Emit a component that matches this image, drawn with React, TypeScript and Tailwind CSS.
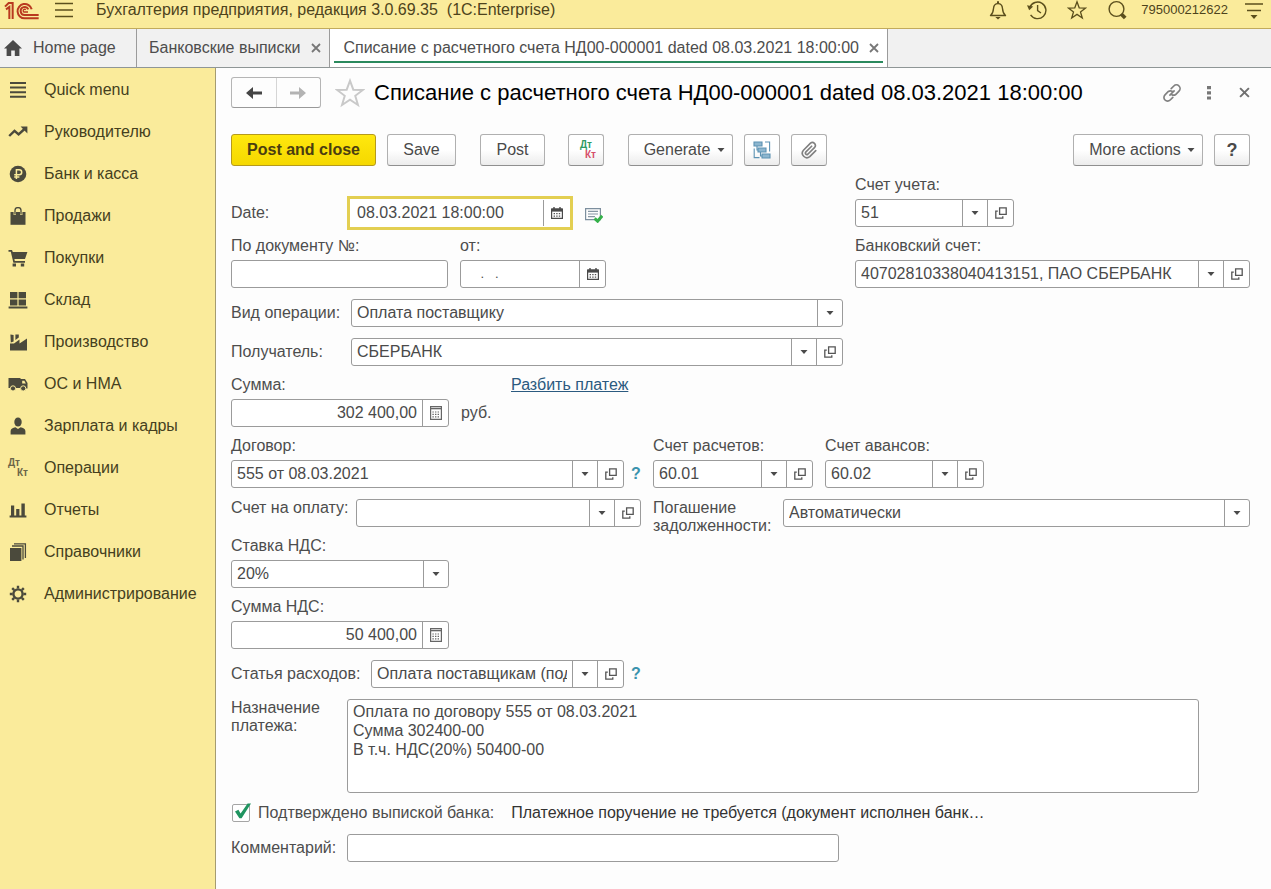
import React from "react";

type IconProps = { className?: string };

/* ---------- Icons ---------- */

const Logo = () => (
  <svg viewBox="0 0 108 57" className="h-[19px] w-9 shrink-0" fill="none" stroke="#b9391f" strokeWidth="6" aria-label="1C">
    <path d="M3 17 L14 6 H26 V54" />
    <path d="M6 25 L16 18 V54" />
    <path d="M83 25 A21.5 21.5 0 1 0 62 52 H104" />
    <path d="M73 25 A12 12 0 1 0 62 42 H104" />
    <path d="M65 27 A4 4 0 1 0 62 33 H72" strokeWidth="4" />
  </svg>
);

const Burger = () => (
  <svg viewBox="0 0 18 16" className="h-4 w-[18px]" stroke="#5b4f1d" strokeWidth="1.5">
    <path d="M0 1.5H18M0 8H18M0 14.5H18" />
  </svg>
);

const Bell = () => (
  <svg viewBox="0 0 18 20" className="h-5 w-[18px]" fill="none" stroke="#5b4f1d" strokeWidth="1.4">
    <path d="M1.5 15.5 C4 13.5 4.3 11.5 4.5 8.5 C4.7 5.5 6.3 3.6 9 3.6 C11.7 3.6 13.3 5.5 13.5 8.5 C13.7 11.5 14 13.5 16.5 15.5 Z" strokeLinejoin="round" />
    <path d="M9 1.2V3.6" strokeWidth="2" />
    <path d="M6.3 17H11.7L9 19.6Z" fill="#5b4f1d" stroke="none" />
  </svg>
);

const History = () => (
  <svg viewBox="0 0 20 20" className="h-5 w-5" fill="none" stroke="#5b4f1d" strokeWidth="1.4">
    <path d="M2.8 7.5A8.3 8.3 0 1 1 3.6 14.8" />
    <path d="M10.6 5V10.6L14 13" />
    <path d="M0 5.2L6.2 6.6L2.2 10.2Z" fill="#5b4f1d" stroke="none" />
  </svg>
);

const Star = ({ className }: IconProps) => (
  <svg viewBox="0 0 20 20" className={className} fill="none" stroke="currentColor" strokeWidth="1.3" strokeLinejoin="miter">
    <path d="M10 1.8L12.2 7.8L18.6 8L13.5 11.9L15.3 18L10 14.4L4.7 18L6.5 11.9L1.4 8L7.8 7.8Z" />
  </svg>
);

const Search = () => (
  <svg viewBox="0 0 20 20" className="h-5 w-5" fill="none" stroke="#5b4f1d">
    <circle cx="9.5" cy="9" r="7.4" strokeWidth="1.4" />
    <path d="M14.2 14L18.2 18" strokeWidth="3.8" />
  </svg>
);

const Options = () => (
  <svg viewBox="0 0 18 18" className="h-[18px] w-[18px]" stroke="#5b4f1d" strokeWidth="1.5">
    <path d="M0 3H18M2 9.5H16" />
    <path d="M5.5 14H12.5L9 18Z" fill="#5b4f1d" stroke="none" />
  </svg>
);

const Home = () => (
  <svg viewBox="0 0 18 16" className="h-4 w-[18px]" fill="#4a4a4a">
    <path d="M9 0L18 8.6H15.4V16H10.8V10.5H7.2V16H2.6V8.6H0Z" />
  </svg>
);

const Cross = ({ className }: IconProps) => (
  <svg viewBox="0 0 10 10" className={className} stroke="currentColor" strokeWidth="1.8">
    <path d="M1 1L9 9M9 1L1 9" />
  </svg>
);

const ArrowLeft = ({ className }: IconProps) => (
  <svg viewBox="0 0 18 14" className={className} fill="currentColor">
    <path d="M1 7L8 1V5.5H17V8.5H8V13Z" />
  </svg>
);

const Link = () => (
  <svg viewBox="0 0 24 24" className="h-5 w-5" fill="none" stroke="#808080" strokeWidth="2" strokeLinecap="round">
    <path d="M9.5 14.5L14.5 9.5" />
    <path d="M11 6.8L14.2 3.6A4.3 4.3 0 0 1 20.4 9.8L16.4 13.8A4.3 4.3 0 0 1 11.8 14" />
    <path d="M13 17.2L9.8 20.4A4.3 4.3 0 0 1 3.6 14.2L7.6 10.2A4.3 4.3 0 0 1 12.2 10" />
  </svg>
);

const Dots = () => (
  <svg viewBox="0 0 4 14" className="h-[14px] w-1" fill="#777">
    <path d="M0 0H4V3.2H0ZM0 5.2H4V8.4H0ZM0 10.4H4V13.6H0Z" />
  </svg>
);

const Caret = () => (
  <svg viewBox="0 0 8 4" className="h-1 w-2" fill="#4a4a4a">
    <path d="M0.5 0H7.5L4 4Z" />
  </svg>
);

const OpenIcon = () => (
  <svg viewBox="0 0 12 12" className="h-3 w-3" fill="none" stroke="#555" strokeWidth="1.3">
    <path d="M4.6 0.8H11.2V7.4H4.6Z" />
    <path d="M2.8 4.2H0.8V11.2H7.8V9.2" />
  </svg>
);

const CalendarIcon = () => (
  <svg viewBox="0 0 12 12" className="h-3 w-3" fill="none">
    <path d="M0.6 2H11.4V11.4H0.6Z" stroke="#4a4a4a" strokeWidth="1.2" />
    <path d="M0.6 1.5H11.4V4.6H0.6Z" fill="#4a4a4a" />
    <path d="M3 0V3M9 0V3" stroke="#4a4a4a" strokeWidth="1.4" />
    <path d="M2.6 6.7H9.6M2.6 9.1H9.6" stroke="#555" strokeWidth="1.2" strokeDasharray="1.4 1.2" />
  </svg>
);

const CalculatorIcon = () => (
  <svg viewBox="0 0 12 14" className="h-[14px] w-3" fill="none" stroke="#666">
    <path d="M0.6 0.6H11.4V13.4H0.6Z" strokeWidth="1.2" />
    <path d="M1 2.6H11" strokeWidth="1.4" />
    <path d="M2.4 6H9.8M2.4 8.4H9.8M2.4 10.8H9.8" strokeWidth="1.2" strokeDasharray="1.4 1.2" />
  </svg>
);

const PostedIcon = () => (
  <svg viewBox="0 0 18 16" className="h-4 w-[18px]" fill="none">
    <path d="M0.6 1.6H15.4V12.6H0.6Z" stroke="#7d8f9e" strokeWidth="1.2" />
    <path d="M3 4.4H13M3 7H13M3 9.6H10" stroke="#8696a3" strokeWidth="1.2" />
    <path d="M9.6 11.4L12.6 14.2L17.2 8.8" stroke="#35b14a" strokeWidth="3" />
  </svg>
);

const StructureIcon = () => (
  <svg viewBox="0 0 18 18" className="h-[18px] w-[18px]" fill="#8db6cf" stroke="#5c92b3" strokeWidth="1.1">
    <path d="M1 1H9V5H1ZM5 7H13V11H5ZM9 13H17V17H9Z" />
    <path d="M12 1H16.6V10.5M1.2 7.5V16.6H6.5M4 5V9H5M7.5 11V15H9" fill="none" />
  </svg>
);

const Clip = () => (
  <svg viewBox="0 0 24 24" className="h-[18px] w-[18px]" fill="none" stroke="#808080" strokeWidth="2.2" strokeLinecap="round" strokeLinejoin="round">
    <path d="M15.5 7L7.6 14.9A2 2 0 0 0 10.4 17.7L19.6 8.5A4 4 0 0 0 14 2.9L4.6 12.3A6 6 0 0 0 13 20.8L21 12.8" />
  </svg>
);

const DtKt = ({ dt, kt }: { dt: string; kt: string }) => (
  <span className="flex w-5 flex-col text-[10px] leading-[10px] font-bold" aria-hidden="true">
    <span className={dt}>Дт</span>
    <span className={kt}>Кт</span>
  </span>
);

const menuIcon = "h-[18px] w-5";

const menu: { label: string; icon: React.ReactNode }[] = [
  {
    label: "Quick menu",
    icon: (
      <svg viewBox="0 0 20 18" className={menuIcon} stroke="#4b4a3c" strokeWidth="2">
        <path d="M2 2H18M2 6.6H18M2 11.2H18M2 15.8H18" />
      </svg>
    ),
  },
  {
    label: "Руководителю",
    icon: (
      <svg viewBox="0 0 20 18" className={menuIcon} fill="none" stroke="#4b4a3c" strokeWidth="2.4">
        <path d="M1.2 13L6.5 7.8L10.6 11.4L16.5 6" />
        <path d="M12.6 3.6H19.4V10.4Z" fill="#4b4a3c" stroke="none" />
      </svg>
    ),
  },
  {
    label: "Банк и касса",
    icon: (
      <svg viewBox="0 0 20 18" className={menuIcon} fill="none">
        <circle cx="10" cy="9" r="8.3" fill="#4b4a3c" />
        <path d="M8.4 14V4.8H11.2A2.5 2.5 0 0 1 11.2 9.8H6.2M6.2 12H11.4" stroke="#faeb9b" strokeWidth="1.5" />
      </svg>
    ),
  },
  {
    label: "Продажи",
    icon: (
      <svg viewBox="0 0 20 18" className={menuIcon} fill="none">
        <path d="M2.5 5H17.5V17.8H2.5Z" fill="#4b4a3c" />
        <path d="M6.8 8V4M13.2 8V4" stroke="#faeb9b" strokeWidth="2.4" />
        <path d="M7 7.5V3.4A3 2.8 0 0 1 13 3.4V7.5" stroke="#4b4a3c" strokeWidth="1.3" />
      </svg>
    ),
  },
  {
    label: "Покупки",
    icon: (
      <svg viewBox="0 0 20 18" className={menuIcon} fill="#4b4a3c">
        <path d="M0.5 1H4L4.8 3H19.4L17 10H6.4L6.8 12H17V13.8H5.4L2.8 2.8H0.5Z" />
        <path d="M4.6 14.4H8V17.6H4.6ZM12.8 14.4H16.2V17.6H12.8Z" />
      </svg>
    ),
  },
  {
    label: "Склад",
    icon: (
      <svg viewBox="0 0 20 18" className={menuIcon} fill="#4b4a3c">
        <path d="M2 1H9.4V7.2H2ZM10.6 1H18V7.2H10.6ZM2 8.4H9.4V14.4H2ZM10.6 8.4H18V14.4H10.6ZM0.6 15.4H19.4V17.6H0.6Z" />
      </svg>
    ),
  },
  {
    label: "Производство",
    icon: (
      <svg viewBox="0 0 20 18" className={menuIcon} fill="#4b4a3c">
        <path d="M2 10.5H6L11.5 6.4V10.5L19 5.6V17.5H2Z" />
        <path d="M2.4 1.4L5.6 2V8.6L2.8 9.4ZM7.4 1.4H10.8V4.6L7.4 7Z" />
      </svg>
    ),
  },
  {
    label: "ОС и НМА",
    icon: (
      <svg viewBox="0 0 20 18" className={menuIcon} fill="#4b4a3c">
        <path d="M0.5 3H12.5V13H0.5ZM12.5 4H17L19.5 8V13.4H12.5Z" />
        <path d="M14.2 5.8H16.4L17.8 8.4H14.2Z" fill="#faeb9b" />
        <g stroke="#faeb9b" strokeWidth="1">
          <circle cx="5" cy="13.4" r="2.6" />
          <circle cx="15.2" cy="13.4" r="2.6" />
        </g>
      </svg>
    ),
  },
  {
    label: "Зарплата и кадры",
    icon: (
      <svg viewBox="0 0 20 18" className={menuIcon} fill="#4b4a3c">
        <ellipse cx="10" cy="5" rx="3.7" ry="4.6" />
        <path d="M2.6 17.4V14C2.6 11.8 5 10.8 7.4 10.2L10 12L12.6 10.2C15 10.8 17.4 11.8 17.4 14V17.4Z" />
      </svg>
    ),
  },
  { label: "Операции", icon: <DtKt dt="text-[#6a6548]" kt="self-end text-[#6a6548]" /> },
  {
    label: "Отчеты",
    icon: (
      <svg viewBox="0 0 20 18" className={menuIcon} fill="#4b4a3c">
        <path d="M3 4.4H6.2V15H3ZM8.2 8H11.4V15H8.2ZM13.4 2.4H16.8V15H13.4ZM1.6 14.6H18.4V16.6H1.6Z" />
      </svg>
    ),
  },
  {
    label: "Справочники",
    icon: (
      <svg viewBox="0 0 20 18" className={menuIcon} fill="#4b4a3c">
        <path d="M2 5H13.4V18H2Z" />
        <path d="M4 3H15V16.6M6 0.8H17.4V15" fill="none" stroke="#4b4a3c" strokeWidth="1.3" />
      </svg>
    ),
  },
  {
    label: "Администрирование",
    icon: (
      <svg viewBox="0 0 20 18" className={menuIcon} fill="none" stroke="#4b4a3c">
        <circle cx="10" cy="9" r="4.6" strokeWidth="2.4" />
        <path d="M10 0.8V3.6M10 14.4V17.2M1.8 9H4.6M15.4 9H18.2M4.2 3.2L6.2 5.2M13.8 12.8L15.8 14.8M4.2 14.8L6.2 12.8M13.8 5.2L15.8 3.2" strokeWidth="2.4" />
      </svg>
    ),
  },
];

/* ---------- Form parts ---------- */

const frame = "flex h-7 rounded-[3px] border border-[#9b9b9b] bg-white";
const control = "min-w-0 flex-1 bg-transparent px-[5px] text-[#4a4a4a] outline-none";
const addon = "flex w-[26px] shrink-0 items-center justify-center border-l border-[#9b9b9b]";
const stackedLabel = "mb-[6px] block leading-4";

const OpenButton = () => (
  <button type="button" className={addon} aria-label="Open">
    <OpenIcon />
  </button>
);

type FieldProps = { id: string; value: string; className?: string; open?: boolean };

const Choice = ({ id, value, className = "", open = false }: FieldProps) => (
  <div className={`${frame} ${className}`}>
    <div className="relative flex min-w-0 flex-1">
      <select id={id} defaultValue={value} className="w-full min-w-0 appearance-none bg-transparent pr-[30px] pb-px pl-[5px] text-[#4a4a4a] outline-none">
        <option>{value}</option>
      </select>
      <span className="pointer-events-none absolute inset-y-0 right-0 flex w-[25px] items-center justify-center border-l border-[#9b9b9b]">
        <Caret />
      </span>
    </div>
    {open && <OpenButton />}
  </div>
);

const Amount = ({ id, value }: FieldProps) => (
  <div className={`${frame} w-[218px]`}>
    <input id={id} defaultValue={value} className={`${control} text-right`} />
    <button type="button" className={addon} aria-label="Calculator">
      <CalculatorIcon />
    </button>
  </div>
);

const Stacked = ({ id, label, className = "", children }: { id: string; label: string; className?: string; children: React.ReactNode }) => (
  <div className={className}>
    <label htmlFor={id} className={stackedLabel}>{label}</label>
    {children}
  </div>
);

const toolButton =
  "flex h-8 items-center justify-center rounded-[3px] border border-[#b0b0b0] border-b-[#8f8f8f] bg-linear-to-b from-white from-50% to-[#ececec] text-[#4a4a4a]";

const Help = () => (
  <a href="#help" className="text-[16px] font-bold text-[#3a93ad]">?</a>
);

const docTitle = "Списание с расчетного счета НД00-000001 dated 08.03.2021 18:00:00";

export default function App() {
  return (
    <div className="flex min-h-screen flex-col bg-[#fdfdfd] font-['Liberation_Sans',Arial,sans-serif] text-[16px] leading-5 text-[#4d4d4d]">
      <header className="flex h-[29px] items-center border-b border-[#c2ab5c] bg-[#faeb9b] pr-2 pb-2 pl-1 text-[#4d431c]">
        <Logo />
        <button type="button" aria-label="Main menu" className="ml-[15px]"><Burger /></button>
        <span className="ml-[23px] whitespace-pre">Бухгалтерия предприятия, редакция 3.0.69.35  (1C:Enterprise)</span>
        <div className="ml-auto flex items-center gap-5">
          <button type="button" aria-label="Notifications"><Bell /></button>
          <button type="button" aria-label="History"><History /></button>
          <button type="button" aria-label="Favorites"><Star className="h-5 w-5 text-[#5b4f1d]" /></button>
          <button type="button" aria-label="Search"><Search /></button>
        </div>
        <span className="ml-[14px] text-[13px]">795000212622</span>
        <button type="button" aria-label="Options" className="ml-[17px]"><Options /></button>
      </header>

      <nav className="flex h-[39px] border-b border-[#8f9696] bg-[#f1f1f1]">
        <a href="#home" className="flex w-[137px] items-center gap-[11px] border-r border-[#9b9b9b] pl-1">
          <Home />
          Home page
        </a>
        <div className="flex items-center gap-[11px] border-r border-[#9b9b9b] pr-2 pl-3">
          <a href="#statements">Банковские выписки</a>
          <button type="button" aria-label="Close tab"><Cross className="h-[10px] w-[10px] text-[#777]" /></button>
        </div>
        <div className="flex border-r border-[#9b9b9b] bg-white px-1">
          <div className="mb-1 flex items-center gap-[10px] border-b-2 border-[#2b8a5e] pt-[6px] pr-1 pl-[9px]">
            <a href="#document">{docTitle}</a>
            <button type="button" aria-label="Close tab"><Cross className="h-[10px] w-[10px] text-[#777]" /></button>
          </div>
        </div>
      </nav>

      <div className="flex flex-1">
        <aside className="w-[216px] shrink-0 border-r border-[#a59c70] bg-[#faeb9b] pt-px">
          {menu.map((item) => (
            <a key={item.label} href="#section" className="flex h-[42px] items-center gap-4 pl-2 text-[#453f20]">
              <span className="flex w-5 justify-center">{item.icon}</span>
              {item.label}
            </a>
          ))}
        </aside>

        <main className="min-w-0 flex-1 pt-[9px] pr-[21px] pb-6 pl-[15px]">
          <div className="flex h-[31px] items-center">
            <div className="flex h-[31px] w-[90px] rounded-[3px] border border-[#b5b5b5] border-b-[#999]">
              <button type="button" aria-label="Back" className="flex flex-1 items-center justify-center border-r border-[#d5d5d5]">
                <ArrowLeft className="h-[14px] w-[18px] text-[#444]" />
              </button>
              <button type="button" aria-label="Forward" className="flex flex-1 items-center justify-center">
                <ArrowLeft className="h-[14px] w-[18px] rotate-180 text-[#b3b3b3]" />
              </button>
            </div>
            <button type="button" aria-label="Add to favorites" className="ml-[14px]"><Star className="h-[30px] w-[30px] text-[#c9c9c9]" /></button>
            <h1 className="ml-[9px] text-[22px] leading-7 whitespace-nowrap text-black">{docTitle}</h1>
            <div className="ml-auto flex items-center">
              <button type="button" aria-label="Get link"><Link /></button>
              <button type="button" aria-label="More" className="ml-[25px]"><Dots /></button>
              <button type="button" aria-label="Close" className="ml-7"><Cross className="h-[11px] w-[11px] text-[#707070]" /></button>
            </div>
          </div>

          <div className="mt-[26px] flex items-center">
            <button type="button" className="h-8 w-[145px] rounded-[3px] border border-[#b59a1c] bg-linear-to-b from-[#ffe80e] to-[#f5d800] font-bold text-[#4a3d10]">Post and close</button>
            <button type="button" className={`${toolButton} ml-[11px] w-[69px]`}>Save</button>
            <button type="button" className={`${toolButton} ml-6 w-[65px]`}>Post</button>
            <button type="button" aria-label="Postings" className={`${toolButton} ml-[23px] w-9`}>
              <DtKt dt="text-[#2e9b62]" kt="self-end text-[#d6506a]" />
            </button>
            <button type="button" className={`${toolButton} ml-6 w-[105px] gap-[7px] pl-2`}>Generate <Caret /></button>
            <button type="button" aria-label="Related documents" className={`${toolButton} ml-[11px] w-9`}><StructureIcon /></button>
            <button type="button" aria-label="Attachments" className={`${toolButton} ml-[11px] w-9`}><Clip /></button>
            <button type="button" className={`${toolButton} ml-auto w-[130px] gap-[6px] pl-2`}>More actions <Caret /></button>
            <button type="button" aria-label="Help" className={`${toolButton} ml-[11px] w-9 text-[18px] font-bold`}>?</button>
          </div>

          <form className="mt-[11px] flex flex-col gap-[11px]">
            <div className="grid grid-cols-[612fr_395fr] gap-3">
              <div className="flex flex-col gap-[11px]">
                <div className="flex flex-col gap-2 pt-[19px]">
                  <div className="flex items-center">
                    <label htmlFor="date" className="w-[116px]">Date:</label>
                    <div className="flex h-[34px] w-[226px] border-3 border-[#e3cf52] bg-white py-px pr-px">
                      <input id="date" defaultValue="08.03.2021 18:00:00" className="min-w-0 flex-1 bg-transparent px-[7px] text-[#4a4a4a] outline-none" />
                      <button type="button" className={addon} aria-label="Choose date"><CalendarIcon /></button>
                    </div>
                    <span className="ml-3 pt-1"><PostedIcon /></span>
                  </div>
                  <div className="flex gap-3">
                    <Stacked id="doc-number" label="По документу №:">
                      <div className={`${frame} w-[217px]`}>
                        <input id="doc-number" className={control} />
                      </div>
                    </Stacked>
                    <Stacked id="doc-date" label="от:">
                      <div className={`${frame} w-[146px]`}>
                        <input id="doc-date" defaultValue="    .   ." className={`${control} text-[13px]`} />
                        <button type="button" className={addon} aria-label="Choose date"><CalendarIcon /></button>
                      </div>
                    </Stacked>
                  </div>
                </div>
                <div className="flex items-center">
                  <label htmlFor="operation" className="w-[120px]">Вид операции:</label>
                  <Choice id="operation" value="Оплата поставщику" className="flex-1" />
                </div>
                <div className="flex items-center">
                  <label htmlFor="payee" className="w-[120px]">Получатель:</label>
                  <Choice id="payee" value="СБЕРБАНК" className="flex-1" open />
                </div>
              </div>
              <div className="flex flex-col gap-[11px]">
                <Stacked id="account" label="Счет учета:">
                  <Choice id="account" value="51" className="w-[159px]" open />
                </Stacked>
                <Stacked id="bank-account" label="Банковский счет:">
                  <Choice id="bank-account" value="40702810338040413151, ПАО СБЕРБАНК" open />
                </Stacked>
              </div>
            </div>

            <div className="flex">
              <Stacked id="amount" label="Сумма:" className="w-[280px]">
                <div className="flex items-center gap-3">
                  <Amount id="amount" value="302 400,00" />
                  <span>руб.</span>
                </div>
              </Stacked>
              <a href="#split" className="self-start leading-4 text-[#2b5a80] underline">Разбить платеж</a>
            </div>

            <div className="flex items-end">
              <Stacked id="contract" label="Договор:">
                <Choice id="contract" value="555 от 08.03.2021" className="w-[393px]" open />
              </Stacked>
              <span className="flex h-7 w-[29px] items-center pl-[7px]"><Help /></span>
              <div className="flex gap-3">
                <Stacked id="settlement" label="Счет расчетов:">
                  <Choice id="settlement" value="60.01" className="w-[160px]" open />
                </Stacked>
                <Stacked id="advance" label="Счет авансов:">
                  <Choice id="advance" value="60.02" className="w-[159px]" open />
                </Stacked>
              </div>
            </div>

            <div className="flex h-7 items-start">
              <label htmlFor="invoice" className="w-[125px] leading-[18px] whitespace-nowrap">Счет на оплату:</label>
              <Choice id="invoice" value="" className="w-[285px]" open />
              <label htmlFor="repayment" className="ml-3 w-[130px] leading-[18px]">Погашение задолженности:</label>
              <Choice id="repayment" value="Автоматически" className="flex-1" />
            </div>

            <Stacked id="vat-rate" label="Ставка НДС:">
              <Choice id="vat-rate" value="20%" className="w-[218px]" />
            </Stacked>

            <Stacked id="vat-amount" label="Сумма НДС:">
              <Amount id="vat-amount" value="50 400,00" />
            </Stacked>

            <div className="flex items-center">
              <label htmlFor="expense" className="w-[140px]">Статья расходов:</label>
              <Choice id="expense" value="Оплата поставщикам (подрядчикам)" className="w-[253px]" open />
              <span className="pl-[7px]"><Help /></span>
            </div>

            <div className="flex items-start pr-[51px]">
              <label htmlFor="purpose" className="w-[116px] leading-[18px]">Назначение платежа:</label>
              <textarea
                id="purpose"
                className="h-[94px] flex-1 resize-none rounded-[3px] border border-[#9b9b9b] bg-white px-[5px] py-[2px] leading-[19px] text-[#4a4a4a] outline-none"
                defaultValue={"Оплата по договору 555 от 08.03.2021\nСумма 302400-00\nВ т.ч. НДС(20%) 50400-00"}
              />
            </div>

            <div className="-mt-px flex items-center">
              <label className="flex items-center gap-2">
                <span className="relative flex">
                  <input type="checkbox" defaultChecked className="peer ml-px h-[18px] w-[18px] appearance-none rounded-[2px] border border-[#a5a5a5] bg-white" />
                  <svg viewBox="0 0 18 18" className="pointer-events-none absolute -top-px left-[2px] hidden h-[18px] w-[18px] peer-checked:block" fill="#1f9460">
                    <path d="M2 8.4L5.4 6.8L7.6 10.6L14.6 0.4H18L8.6 15.2H6.4Z" />
                  </svg>
                </span>
                Подтверждено выпиской банка:
              </label>
              <span className="ml-[17px] text-[#333]">Платежное поручение не требуется (документ исполнен банк…</span>
            </div>

            <div className="flex items-center">
              <label htmlFor="comment" className="w-[116px]">Комментарий:</label>
              <div className={`${frame} w-[492px]`}>
                <input id="comment" className={control} />
              </div>
            </div>
          </form>
        </main>
      </div>
    </div>
  );
}
